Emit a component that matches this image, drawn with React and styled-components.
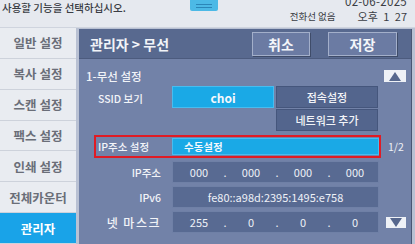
import React from "react"
import styled, { createGlobalStyle } from "styled-components"

const GlobalStyle = createGlobalStyle`
  html, body {
    margin: 0;
    padding: 0;
    background: #e3e7ee;
  }
  body {
    font-family: "Noto Sans CJK KR", "Noto Sans", sans-serif;
  }
`

const menu = ["일반 설정", "복사 설정", "스캔 설정", "팩스 설정", "인쇄 설정", "전체카운터", "관리자"]

export default function App() {
  return (
    <Screen>
      <GlobalStyle />
      <TopBar>
        <Message>사용할 기능을 선택하십시오.</Message>
        <Handle>
          <span />
          <span />
        </Handle>
        <Status>
          <DateText>02-06-2025</DateText>
          <StatusLine>
            <Line>전화선 없음</Line>
            <Clock>오후 1 27</Clock>
          </StatusLine>
        </Status>
      </TopBar>
      <Main>
        <Sidebar>
          {menu.map((m, i) => (
            <MenuItem key={m} $active={i === menu.length - 1}>
              {m}
            </MenuItem>
          ))}
        </Sidebar>
        <Panel>
          <Header>
            <Title>관리자 &gt; 무선</Title>
            <HeadButton $w={58}>취소</HeadButton>
            <HeadButton $w={69}>저장</HeadButton>
          </Header>
          <Body>
            <SectionRow>
              <Section>1-무선 설정</Section>
              <Arrow>
                <svg width="12" height="9" viewBox="0 0 12 9">
                  <polygon points="6,0 12,9 0,9" fill="#56678d" />
                </svg>
              </Arrow>
            </SectionRow>
            <SsidRow>
              <SsidLabel>SSID 보기</SsidLabel>
              <SsidGrid>
                <CyanField $center>choi</CyanField>
                <DarkButton>접속설정</DarkButton>
                <span />
                <DarkButton>네트워크 추가</DarkButton>
              </SsidGrid>
            </SsidRow>
            <Row>
              <Frame>
                <FrameLabel>IP주소 설정</FrameLabel>
                <CyanField>수동설정</CyanField>
              </Frame>
              <Page>1/2</Page>
            </Row>
            <Row>
              <Label>IP주소</Label>
              <Field>
                <Octets>
                  <span>000</span><span>.</span><span>000</span><span>.</span>
                  <span>000</span><span>.</span><span>000</span>
                </Octets>
              </Field>
            </Row>
            <Row>
              <Label>IPv6</Label>
              <Field $center>fe80::a98d:2395:1495:e758</Field>
            </Row>
            <Row>
              <Label $wide>넷 마스크</Label>
              <Field>
                <Octets>
                  <span>255</span><span>.</span><span>0</span><span>.</span>
                  <span>0</span><span>.</span><span>0</span>
                </Octets>
              </Field>
              <Arrow $down>
                <svg width="12" height="9" viewBox="0 0 12 9">
                  <polygon points="0,0 12,0 6,9" fill="#56678d" />
                </svg>
              </Arrow>
            </Row>
          </Body>
        </Panel>
      </Main>
    </Screen>
  )
}

const Screen = styled.div`
  width: 415px;
  height: 244px;
  overflow: hidden;
  display: flex;
  flex-direction: column;
  background: #e3e7ee;
`

const TopBar = styled.div`
  height: 28px;
  display: flex;
  align-items: flex-start;
  background: #e6e9ef;
  border-bottom: 1px solid #cfd4de;
  box-sizing: border-box;
  color: #3a3d44;
`

const Message = styled.div`
  width: 190px;
  padding-left: 2px;
  box-sizing: border-box;
  font-size: 10.5px;
  line-height: 16px;
  font-weight: 500;
`

const Handle = styled.div`
  width: 28px;
  height: 11px;
  background: #4cb9e6;
  border-radius: 0 0 2px 2px;
  display: flex;
  flex-direction: column;
  align-items: center;
  justify-content: center;
  gap: 2px;
  span {
    width: 16px;
    height: 1px;
    background: #2b86b8;
  }
`

const Status = styled.div`
  margin-left: auto;
  padding-right: 8px;
  display: flex;
  flex-direction: column;
  align-items: flex-end;
`

const DateText = styled.div`
  margin-top: -6px;
  font-size: 11.5px;
  line-height: 14px;
  letter-spacing: 0.3px;
`

const StatusLine = styled.div`
  display: flex;
  align-items: center;
  gap: 22px;
  margin-top: 2px;
`

const Line = styled.div`
  font-size: 9.5px;
  line-height: 12px;
`

const Clock = styled.div`
  font-size: 11px;
  line-height: 12px;
  word-spacing: 3px;
`

const Main = styled.div`
  flex: 1;
  display: flex;
  background: #b9c1d3;
`

const Sidebar = styled.div`
  width: 78px;
  display: flex;
  flex-direction: column;
  background: #e6e9ef;
`

const MenuItem = styled.div`
  flex: 1;
  display: flex;
  align-items: center;
  justify-content: center;
  font-size: 12.5px;
  font-weight: 700;
  color: ${p => (p.$active ? "#ffffff" : "#6a6e78")};
  background: ${p => (p.$active ? "#19a3e8" : "#e9ecf1")};
  border-bottom: 1px solid #cdd2db;
`

const Panel = styled.div`
  flex: 1;
  margin: 1px 3px 0 3px;
  display: flex;
  flex-direction: column;
  background: #7282a8;
  border-right: 1px solid #4a5673;
`

const Header = styled.div`
  height: 29px;
  display: flex;
  align-items: center;
  gap: 18px;
  padding: 0 14px 0 11px;
  background: #58698f;
  border-bottom: 1px solid #4c5b7e;
`

const Title = styled.div`
  flex: 1;
  font-size: 14px;
  font-weight: 700;
  color: #f2f4f8;
`

const HeadButton = styled.div`
  width: ${p => p.$w}px;
  height: 24px;
  box-sizing: border-box;
  display: flex;
  align-items: center;
  justify-content: center;
  background: #6b7ba3;
  border: 1px solid #a3afca;
  box-shadow: 1px 1px 0 #3f4c69;
  font-size: 14px;
  font-weight: 700;
  color: #f4f6fa;
`

const Body = styled.div`
  flex: 1;
  display: flex;
  flex-direction: column;
  padding: 10px 5px 0 15px;
  gap: 3px;
`

const SectionRow = styled.div`
  display: flex;
  align-items: center;
  justify-content: space-between;
  height: 14px;
`

const Section = styled.div`
  margin-left: -8px;
  font-size: 11.5px;
  font-weight: 500;
  color: #f2f4f8;
`

const Arrow = styled.div`
  width: ${p => (p.$down ? 20 : 22)}px;
  height: ${p => (p.$down ? 11 : 12)}px;
  margin-left: ${p => (p.$down ? "7px" : "0")};
  display: flex;
  align-items: center;
  justify-content: center;
  background: #eef1f6;
`

const SsidRow = styled.div`
  display: flex;
  margin-bottom: 1px;
`

const SsidLabel = styled.div`
  width: 78px;
  padding: 5px 0 0 4px;
  box-sizing: border-box;
  font-size: 10.5px;
  font-weight: 500;
  color: #f2f4f8;
`

const SsidGrid = styled.div`
  display: grid;
  grid-template-columns: 102px 102px;
  grid-template-rows: 22px 22px;
  column-gap: 2px;
  row-gap: 1px;
`

const CyanField = styled.div`
  display: flex;
  align-items: center;
  justify-content: ${p => (p.$center ? "center" : "flex-start")};
  padding-left: ${p => (p.$center ? "0" : "11px")};
  background: #1aa9e6;
  border: 1px solid #46bdf0;
  box-sizing: border-box;
  font-size: ${p => (p.$center ? "12px" : "10.5px")};
  font-weight: 700;
  color: #f4f8fc;
`

const DarkButton = styled.div`
  display: flex;
  align-items: center;
  justify-content: center;
  background: #53658d;
  border: 1px solid #45567c;
  box-sizing: border-box;
  font-size: 11px;
  font-weight: 500;
  color: #f2f4f8;
`

const Row = styled.div`
  display: flex;
  align-items: center;
`

const Frame = styled.div`
  width: 287px;
  height: 23px;
  box-sizing: border-box;
  display: grid;
  grid-template-columns: 76px 207px;
  padding: 1px 0;
  border: 2px solid #e01b24;
  align-items: stretch;
`

const FrameLabel = styled.div`
  display: flex;
  align-items: center;
  padding-left: 2px;
  font-size: 10.5px;
  font-weight: 500;
  color: #f4f6fa;
`

const Page = styled.div`
  margin-left: 7px;
  font-size: 10.5px;
  color: #eef1f6;
`

const Label = styled.div`
  width: 78px;
  padding-right: 11px;
  box-sizing: border-box;
  text-align: right;
  font-size: ${p => (p.$wide ? "12px" : "10.5px")};
  letter-spacing: ${p => (p.$wide ? "1.5px" : "0")};
  font-weight: 500;
  color: #f2f4f8;
`

const Field = styled.div`
  width: 207px;
  height: 22px;
  box-sizing: border-box;
  display: flex;
  align-items: center;
  justify-content: ${p => (p.$center ? "center" : "flex-start")};
  background: #586a92;
  border: 1px solid #6f80a6;
  font-size: 11px;
  color: #eef1f7;
`

const Octets = styled.div`
  display: grid;
  grid-template-columns: repeat(7, 26px);
  justify-items: center;
  padding-left: 13px;
`
